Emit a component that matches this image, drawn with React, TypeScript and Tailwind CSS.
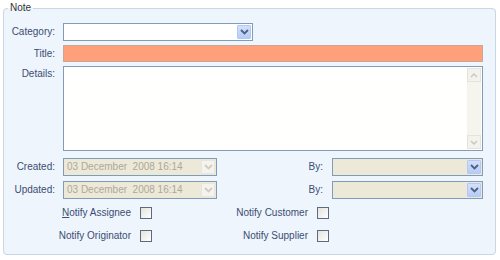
import React from "react";

const labelCls = "w-[51px] shrink-0 text-right text-[#3b4d72] whitespace-nowrap";

function Chevron({ disabled }: { disabled?: boolean }) {
  return (
    <svg width="9" height="6" viewBox="0 0 9 6">
      <path
        d="M1 1 L4.5 4.5 L8 1"
        fill="none"
        stroke={disabled ? "#cfcdc2" : "#4d6185"}
        strokeWidth="1.8"
      />
    </svg>
  );
}

function Combo({
  width,
  disabled,
  beige,
  text,
}: {
  width: string;
  disabled?: boolean;
  beige?: boolean;
  text?: string;
}) {
  return (
    <div
      className={`${width} h-[18px] flex items-stretch border border-[#7f9db9] p-[1px] ${
        disabled || beige ? "bg-[#ece9d8]" : "bg-white"
      }`}
    >
      <div className="flex-1 flex items-center pl-[2px] text-[#aca899] whitespace-pre">{text}</div>
      <div
        className={`w-[14px] flex items-center justify-center border rounded-[1px] ${
          disabled
            ? "bg-[#f4f3ee] border-[#e8e6dc]"
            : "bg-gradient-to-b from-[#d2e0fc] to-[#b6cbf6] border-[#b4c8f2]"
        }`}
      >
        <Chevron disabled={disabled} />
      </div>
    </div>
  );
}

function Check() {
  return <div className="w-[12px] h-[12px] border border-[#5c6b80] bg-gradient-to-br from-[#e4e3dc] to-white" />;
}

export default function App() {
  return (
    <div
      className="w-[500px] h-[260px] bg-white pt-[1px] pl-[3px] text-[10px] leading-[12px]"
      style={{ fontFamily: '"Liberation Sans", Arial, sans-serif' }}
    >
      <fieldset className="w-[493px] h-[254px] border border-[#c9d6e3] rounded-[4px] bg-[#eef5fc] pr-[12px]">
        <legend className="ml-[4px] px-[2px] text-[#333] leading-[14px]">Note</legend>

        <div className="flex flex-col pt-[8px]">
          <div className="flex items-center gap-[8px]">
            <span className={labelCls}>Category:</span>
            <Combo width="w-[190px]" />
          </div>

          <div className="flex items-center gap-[8px] mt-[4px]">
            <span className={labelCls}>Title:</span>
            <div className="flex-1 h-[17px] border border-[#c9a797] bg-[#ffa07a]" />
          </div>

          <div className="flex items-start gap-[8px] mt-[4px]">
            <span className={`${labelCls} pt-[2px]`}>Details:</span>
            <div className="flex-1 h-[85px] border border-[#7f9db9] bg-[#fffffd] flex justify-end p-[1px]">
              <div className="w-[14px] flex flex-col justify-between bg-[#f5f4ed]">
                <div className="h-[14px] flex items-center justify-center border border-[#e6e4da] bg-[#f3f2ec]">
                  <svg width="8" height="5" viewBox="0 0 8 5">
                    <path d="M1 4 L4 1 L7 4" fill="none" stroke="#c9c7bc" strokeWidth="1.4" />
                  </svg>
                </div>
                <div className="h-[14px] flex items-center justify-center border border-[#e6e4da] bg-[#f3f2ec]">
                  <svg width="8" height="5" viewBox="0 0 8 5">
                    <path d="M1 1 L4 4 L7 1" fill="none" stroke="#c9c7bc" strokeWidth="1.4" />
                  </svg>
                </div>
              </div>
            </div>
          </div>

          <div className="flex items-center gap-[8px] mt-[7px]">
            <span className={labelCls}>Created:</span>
            <Combo width="w-[154px]" disabled text="03 December  2008 16:14" />
            <span className="flex-1 text-right text-[#3b4d72] pr-[1px]">By:</span>
            <Combo width="w-[151px]" beige />
          </div>

          <div className="flex items-center gap-[8px] mt-[5px]">
            <span className={labelCls}>Updated:</span>
            <Combo width="w-[154px]" disabled text="03 December  2008 16:14" />
            <span className="flex-1 text-right text-[#3b4d72] pr-[1px]">By:</span>
            <Combo width="w-[151px]" beige />
          </div>

          <div className="flex items-center mt-[8px] pl-[59px] text-[#3b4d72] whitespace-nowrap">
            <span className="w-[68px] flex justify-end">
              <span>
                <span className="underline">N</span>otify Assignee
              </span>
            </span>
            <span className="ml-[9px]"><Check /></span>
            <span className="w-[156px] text-right">Notify Customer</span>
            <span className="ml-[9px]"><Check /></span>
          </div>

          <div className="flex items-center mt-[11px] pl-[59px] text-[#3b4d72] whitespace-nowrap">
            <span className="w-[68px] flex justify-end">Notify Originator</span>
            <span className="ml-[9px]"><Check /></span>
            <span className="w-[156px] text-right">Notify Supplier</span>
            <span className="ml-[9px]"><Check /></span>
          </div>
        </div>
      </fieldset>
    </div>
  );
}
